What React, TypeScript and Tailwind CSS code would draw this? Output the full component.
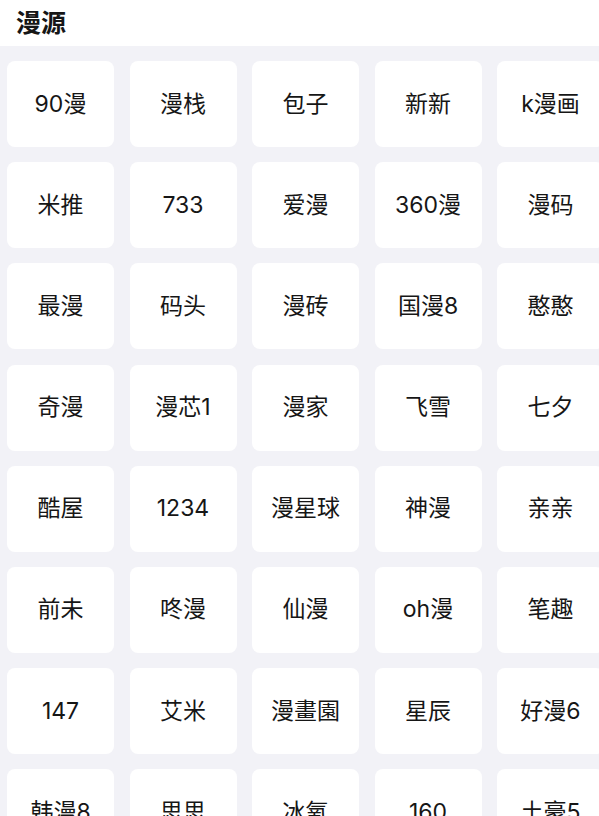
const sources = [
  "90漫", "漫栈", "包子", "新新", "k漫画",
  "米推", "733", "爱漫", "360漫", "漫码",
  "最漫", "码头", "漫砖", "国漫8", "憨憨",
  "奇漫", "漫芯1", "漫家", "飞雪", "七夕",
  "酷屋", "1234", "漫星球", "神漫", "亲亲",
  "前未", "咚漫", "仙漫", "oh漫", "笔趣",
  "147", "艾米", "漫畫園", "星辰", "好漫6",
  "韩漫8", "思思", "冰氧", "160", "土豪5",
];

export default function App() {
  return (
    <div
      className="h-[816px] w-[599px] overflow-hidden bg-[#f2f2f7] text-[#161616]"
      style={{ fontFamily: 'Inter, "Noto Sans CJK SC", sans-serif' }}
    >
      <header className="flex h-[46px] items-center bg-white px-4">
        <h1 className="text-[25px] font-bold leading-none">漫源</h1>
      </header>
      <main className="grid grid-cols-[repeat(5,107px)] gap-x-[15.5px] gap-y-[15.2px] px-[7px] pt-[15px]">
        {sources.map((name) => (
          <div
            key={name}
            className="flex h-[86px] items-center justify-center rounded-lg bg-white text-[23px] leading-none"
          >
            {name}
          </div>
        ))}
      </main>
    </div>
  );
}
